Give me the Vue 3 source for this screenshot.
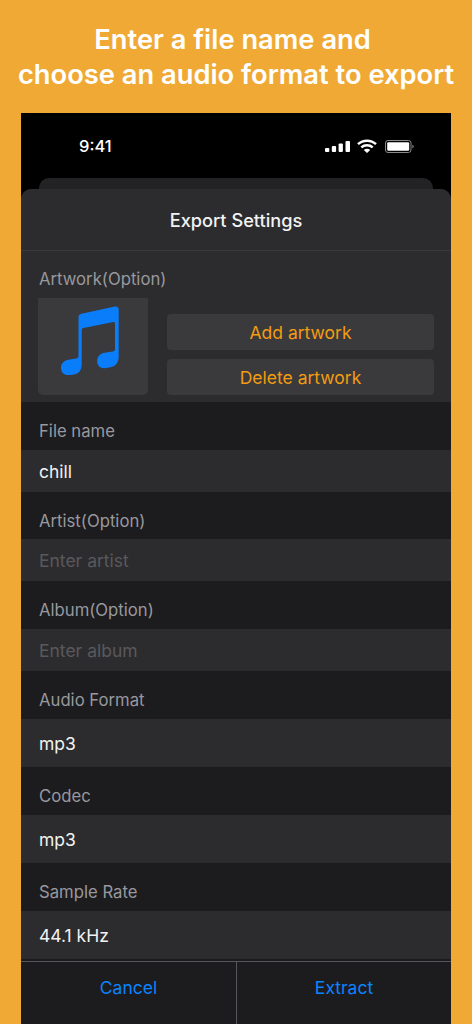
<script setup>
const fields = [
  { label: 'File name', value: 'chill', kind: 'short' },
  { label: 'Artist(Option)', value: 'Enter artist', kind: 'short', placeholder: true },
  { label: 'Album(Option)', value: 'Enter album', kind: 'short', placeholder: true },
  { label: 'Audio Format', value: 'mp3', kind: 'tall' },
  { label: 'Codec', value: 'mp3', kind: 'tall' },
  { label: 'Sample Rate', value: '44.1 kHz', kind: 'tall' },
]
</script>

<template>
  <main class="page">
    <h1 class="headline">Enter a file name and&nbsp;<br />choose an audio format to export</h1>
    <section class="phone">
      <div class="status">
        <span class="time">9:41</span>
        <div class="status-icons">
          <svg width="25" height="11" viewBox="0 0 25 11" fill="#fff">
            <rect x="0" y="7" width="4.300" height="4" rx="1" />
            <rect x="6.800" y="5" width="4.300" height="6" rx="1" />
            <rect x="13.600" y="2.500" width="4.300" height="8.500" rx="1" />
            <rect x="20.500" y="0" width="4.500" height="11" rx="1" />
          </svg>
          <svg width="20" height="14" viewBox="0 0 20 14" fill="none" stroke="#fff" stroke-width="2.400">
            <path d="M1 5.200C6 .5 14 .5 19 5.200" />
            <path d="M4.300 8.400C7.500 5.500 12.500 5.500 15.700 8.400" />
            <path d="M10 14 6.800 10.900C8.700 9.500 11.300 9.500 13.200 10.900Z" fill="#fff" stroke="none" />
          </svg>
          <svg class="battery" width="29" height="13" viewBox="0 0 29 13">
            <rect x=".5" y=".5" width="25.500" height="12" rx="2.500" fill="none" stroke="#8a8a8a" />
            <rect x="2.200" y="2.200" width="22" height="8.600" rx="1.200" fill="#fff" />
            <path d="M27.400 4.800c.9.3 1.300 1 1.300 1.700s-.4 1.400-1.300 1.700Z" fill="#8a8a8a" />
          </svg>
        </div>
      </div>
      <div class="back-card"></div>
      <div class="sheet">
        <header class="sheet-title">Export Settings</header>
        <div class="artwork">
          <div class="artwork-label">Artwork(Option)</div>
          <div class="artwork-row">
            <div class="thumb">
              <svg width="58" height="70" viewBox="0 0 58 70">
                <path fill="#0a7dfb" d="M17.500 11.500c0-2 1-3.300 3-3.700L54 .6c2.200-.4 3.700.8 3.700 3V50c0 6.500-2.500 10.500-9.500 11.500l-3.500.5C39 63 36.200 59.500 36.200 55c0-4.500 3-7.500 7.500-8.200l8-1.200c1.500-.2 2.300-1 2.300-2.500V17.500c0-1.200-.6-1.800-1.800-1.500L22.500 22c-1.300.3-1.800 1-1.800 2.200V58c0 6.500-3 10-9 10.700l-3.500.3C3 69.500 0 66.500 0 62c0-4.500 3-7.500 7.500-8.200l7.500-1.200c1.600-.3 2.500-1 2.500-2.600Z" />
              </svg>
            </div>
            <div class="artwork-actions">
              <button class="art-btn" type="button">Add artwork</button>
              <button class="art-btn" type="button">Delete artwork</button>
            </div>
          </div>
        </div>
        <div v-for="f in fields" :key="f.label" class="field">
          <div class="field-label">{{ f.label }}</div>
          <div class="field-value" :class="[f.kind, { placeholder: f.placeholder }]">{{ f.value }}</div>
        </div>
        <footer class="actions">
          <button class="action" type="button">Cancel</button>
          <button class="action" type="button">Extract</button>
        </footer>
      </div>
    </section>
  </main>
</template>

<style>
html, body { margin: 0; background: #f0a934; }
</style>

<style scoped>
.page {
  width: 472px;
  height: 1024px;
  overflow: hidden;
  background: #f0a934;
  font-family: Inter, "Liberation Sans", sans-serif;
  display: flex;
  flex-direction: column;
}
.headline {
  margin: 0;
  height: 113px;
  box-sizing: border-box;
  padding-top: 22px;
  color: #fff;
  font-size: 27.300px;
  font-weight: 600;
  line-height: 35px;
  text-align: center;
  white-space: nowrap;
}
.phone {
  margin: 0 21px;
  width: 430px;
  flex: 1;
  background: #000;
  display: flex;
  flex-direction: column;
  min-height: 0;
}
.status {
  height: 65px;
  display: flex;
  justify-content: space-between;
  align-items: flex-start;
  padding: 23px 37px 0 58px;
  box-sizing: border-box;
  color: #fff;
}
.time {
  font-size: 16.500px;
  font-weight: 500;
  line-height: 20px;
}
.status-icons {
  display: flex;
  align-items: center;
  gap: 7px;
  height: 20px;
}
.battery { margin-left: 1px; }
.back-card {
  height: 20px;
  margin: 0 18px;
  background: #232325;
  border-radius: 10px 10px 0 0;
}
.sheet {
  margin-top: -9px;
  flex: 1;
  display: flex;
  flex-direction: column;
  background: #1c1c1e;
  border-radius: 10px 10px 0 0;
  overflow: hidden;
}
.sheet-title {
  height: 61px;
  flex: none;
  background: #2c2c2e;
  border-bottom: 1px solid #3a3a3c;
  color: #f2f2f2;
  font-size: 18.200px;
  font-weight: 500;
  line-height: 62px;
  text-align: center;
}
.artwork {
  height: 151px;
  flex: none;
  box-sizing: border-box;
  background: #2c2c2e;
  padding: 16px 17px 0;
}
.artwork-label, .field-label {
  color: #98989e;
  font-size: 16.700px;
  line-height: 24px;
}
.artwork-label { height: 31px; padding-left: 1px; }
.artwork-row {
  display: flex;
  gap: 19px;
}
.thumb {
  width: 110px;
  height: 97px;
  box-sizing: border-box;
  padding: 0 6px 12px 0;
  background: #3a3a3c;
  border-radius: 0 0 5px 5px;
  display: flex;
  align-items: center;
  justify-content: center;
}
.artwork-actions {
  flex: 1;
  display: flex;
  flex-direction: column;
  gap: 9px;
  padding-top: 16px;
}
.art-btn {
  height: 36px;
  border: 0;
  padding: 2px 0 0;
  border-radius: 4px;
  background: #3a3a3c;
  color: #f39c12;
  font: 400 17.500px/24px Inter, "Liberation Sans", sans-serif;
}
.field-label {
  height: 47.670px;
  line-height: 58.500px;
  padding-left: 18px;
  box-sizing: border-box;
}
.field-value {
  background: #2c2c2e;
  color: #f2f2f2;
  font-size: 17.500px;
  padding-left: 18px;
}
.field-value.short { height: 42px; line-height: 43px; }
.field-value.tall { height: 48.330px; line-height: 49.500px; }
.field-value.placeholder { color: #59595d; }
.actions {
  margin-top: 2px;
  flex: 1;
  display: grid;
  grid-template-columns: 1fr 1fr;
  border-top: 1px solid #55555a;
}
.action {
  border: 0;
  background: transparent;
  color: #0a84ff;
  padding: 0 0 10px;
  font: 400 17.500px/24px Inter, "Liberation Sans", sans-serif;
}
.action + .action { border-left: 1px solid #55555a; }
</style>
